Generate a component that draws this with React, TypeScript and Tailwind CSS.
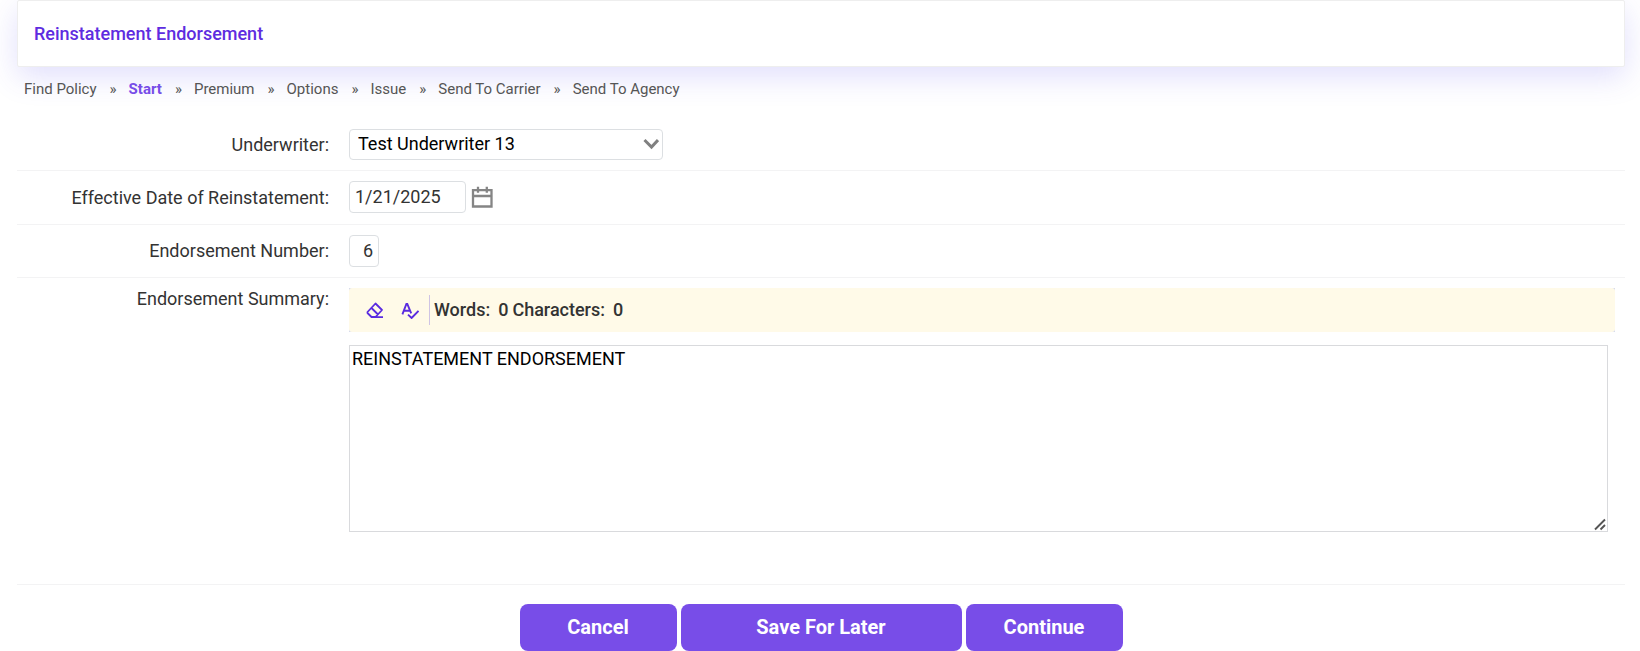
import { useState } from 'react'
import type { ReactNode } from 'react'

const STEPS = ['Find Policy', 'Start', 'Premium', 'Options', 'Issue', 'Send To Carrier', 'Send To Agency']
const ACTIVE_STEP = 'Start'

const CalendarIcon = () => (
  <svg width="22" height="22" viewBox="0 0 22 22" fill="none" stroke="#858585" strokeWidth="2.3" aria-hidden="true">
    <path d="M2 4.2h18.5v16.3H2zM2 10h18.5M7 0.8v6M15.8 0.8v6" />
  </svg>
)

const EraserIcon = () => (
  <svg width="18" height="18" viewBox="0 0 18 18" fill="none" stroke="#5a2be0" strokeWidth="1.8" strokeLinejoin="round" aria-hidden="true">
    <path d="M5.5 16L1.5 12V11L9.5 2.5L16 9L9.5 16zM5.5 7L12 13.5M9 16.2h8" />
  </svg>
)

const SpellCheckIcon = () => (
  <svg width="18" height="18" viewBox="0 0 18 18" fill="none" stroke="#5a2be0" strokeWidth="1.9" aria-hidden="true">
    <path d="M1.4 13.4L5.4 3h0.9L10.2 12.4M3 9.8h5.8M7 13.6L10.6 17L17.5 9.8" />
  </svg>
)

type FieldRowProps = {
  label: string
  htmlFor: string
  tall?: boolean
  children: ReactNode
}

const FieldRow = ({ label, htmlFor, tall, children }: FieldRowProps) => (
  <div className={`flex gap-5 border-b border-[#f3f3f4] py-[10px] ${tall ? 'items-start' : 'items-center'}`}>
    <label htmlFor={htmlFor} className="w-78 shrink-0 text-right leading-[22px]">
      {label}
    </label>
    <div className={`min-w-0 flex-1 ${tall ? 'pb-[42px]' : ''}`}>{children}</div>
  </div>
)

export default function App() {
  const [summary, setSummary] = useState('REINSTATEMENT ENDORSEMENT')

  return (
    <div className="min-h-screen overflow-hidden bg-white pr-[15px] pl-[17px] font-[Roboto,sans-serif] text-[18px] text-[#333]">
      <header className="rounded-xs border border-[#eeeeee] bg-white px-4 pt-[21px] pb-5 shadow-[0_10px_30px_rgba(75,68,235,0.17)]">
        <h1 className="leading-6 font-medium text-[#5e2ce0]">Reinstatement Endorsement</h1>
      </header>

      <nav className="relative px-[7px] pt-[10px]">
        <ol className="flex text-[15px] leading-6 text-[#555]">
          {STEPS.map((step, idx) => (
            <li key={step} className="flex">
              {idx > 0 && <span className="pr-3 pl-[13px]">»</span>}
              <a href="#" className={step === ACTIVE_STEP ? 'font-bold text-[#774de8]' : ''}>
                {step}
              </a>
            </li>
          ))}
        </ol>
      </nav>

      <form className="relative pt-[18px]" onSubmit={(e) => e.preventDefault()}>
        <FieldRow label="Underwriter:" htmlFor="underwriter">
          <div className="relative w-[314px]">
            <select
              id="underwriter"
              className="block h-[31px] w-full appearance-none rounded border border-[#dcdfe2] bg-white pr-8 pb-[2px] pl-2 text-black"
            >
              <option>Test Underwriter 13</option>
            </select>
            <svg
              className="pointer-events-none absolute top-2 right-1"
              width="16" height="16" viewBox="0 0 16 16" fill="none" stroke="#808080" strokeWidth="3"
              aria-hidden="true"
            >
              <path d="M1.5 3L8.5 10L15 3" />
            </svg>
          </div>
        </FieldRow>

        <FieldRow label="Effective Date of Reinstatement:" htmlFor="effective-date">
          <div className="flex items-start gap-[5px]">
            <input
              id="effective-date"
              defaultValue="1/21/2025"
              className="h-8 w-[117px] rounded border border-[#dcdfe2] bg-white px-[5px] pb-[2px]"
            />
            <button type="button" aria-label="Pick a date" className="h-[33px] pb-[2px]">
              <CalendarIcon />
            </button>
          </div>
        </FieldRow>

        <FieldRow label="Endorsement Number:" htmlFor="endorsement-number">
          <input
            id="endorsement-number"
            defaultValue="6"
            className="block h-8 w-[30px] rounded border border-[#dcdfe2] bg-white px-[5px] pb-[2px] text-right"
          />
        </FieldRow>

        <FieldRow label="Endorsement Summary:" htmlFor="summary" tall>
          <div className="mr-[10px] bg-[#d3d8ee]">
            <div className="flex h-11 items-center rounded-[3px] bg-[#fffae8] pl-[17px] font-medium">
              <button type="button" aria-label="Clear text" className="mr-[17px]">
                <EraserIcon />
              </button>
              <button type="button" aria-label="Check spelling" className="mr-[10px]">
                <SpellCheckIcon />
              </button>
              <div className="flex h-[30px] items-center border-l border-[#cfc4e4] pb-[2px] pl-1">
                <span>Words:</span>
                <span className="mr-1 ml-2">0</span>
                <span>Characters:</span>
                <span className="ml-2">0</span>
              </div>
            </div>
          </div>
          <div className="relative mt-[13px] mr-[17px]">
            <textarea
              id="summary"
              value={summary}
              onChange={(e) => setSummary(e.target.value)}
              className="block h-[187px] w-full border border-[#d9dadd] bg-white px-[2px] py-px leading-6 text-black"
            />
            {/* resize grip */}
            <svg
              className="pointer-events-none absolute right-px bottom-px bg-white"
              width="13" height="13" viewBox="0 0 13 13" fill="none" stroke="#555" strokeWidth="1.9"
              aria-hidden="true"
            >
              <path d="M1 11.5L11 1.5M6.5 11.5L11 7" />
            </svg>
          </div>
        </FieldRow>

        <div className="flex justify-center gap-1 pt-[19px] text-[20px] font-bold text-white">
          <button type="button" className="h-[47px] w-[157px] rounded-lg bg-[#784de8] pb-[2px]">Cancel</button>
          <button type="button" className="h-[47px] w-[281px] rounded-lg bg-[#784de8] pb-[2px]">Save For Later</button>
          <button type="submit" className="h-[47px] w-[157px] rounded-lg bg-[#784de8] pb-[2px]">Continue</button>
        </div>
      </form>
    </div>
  )
}
